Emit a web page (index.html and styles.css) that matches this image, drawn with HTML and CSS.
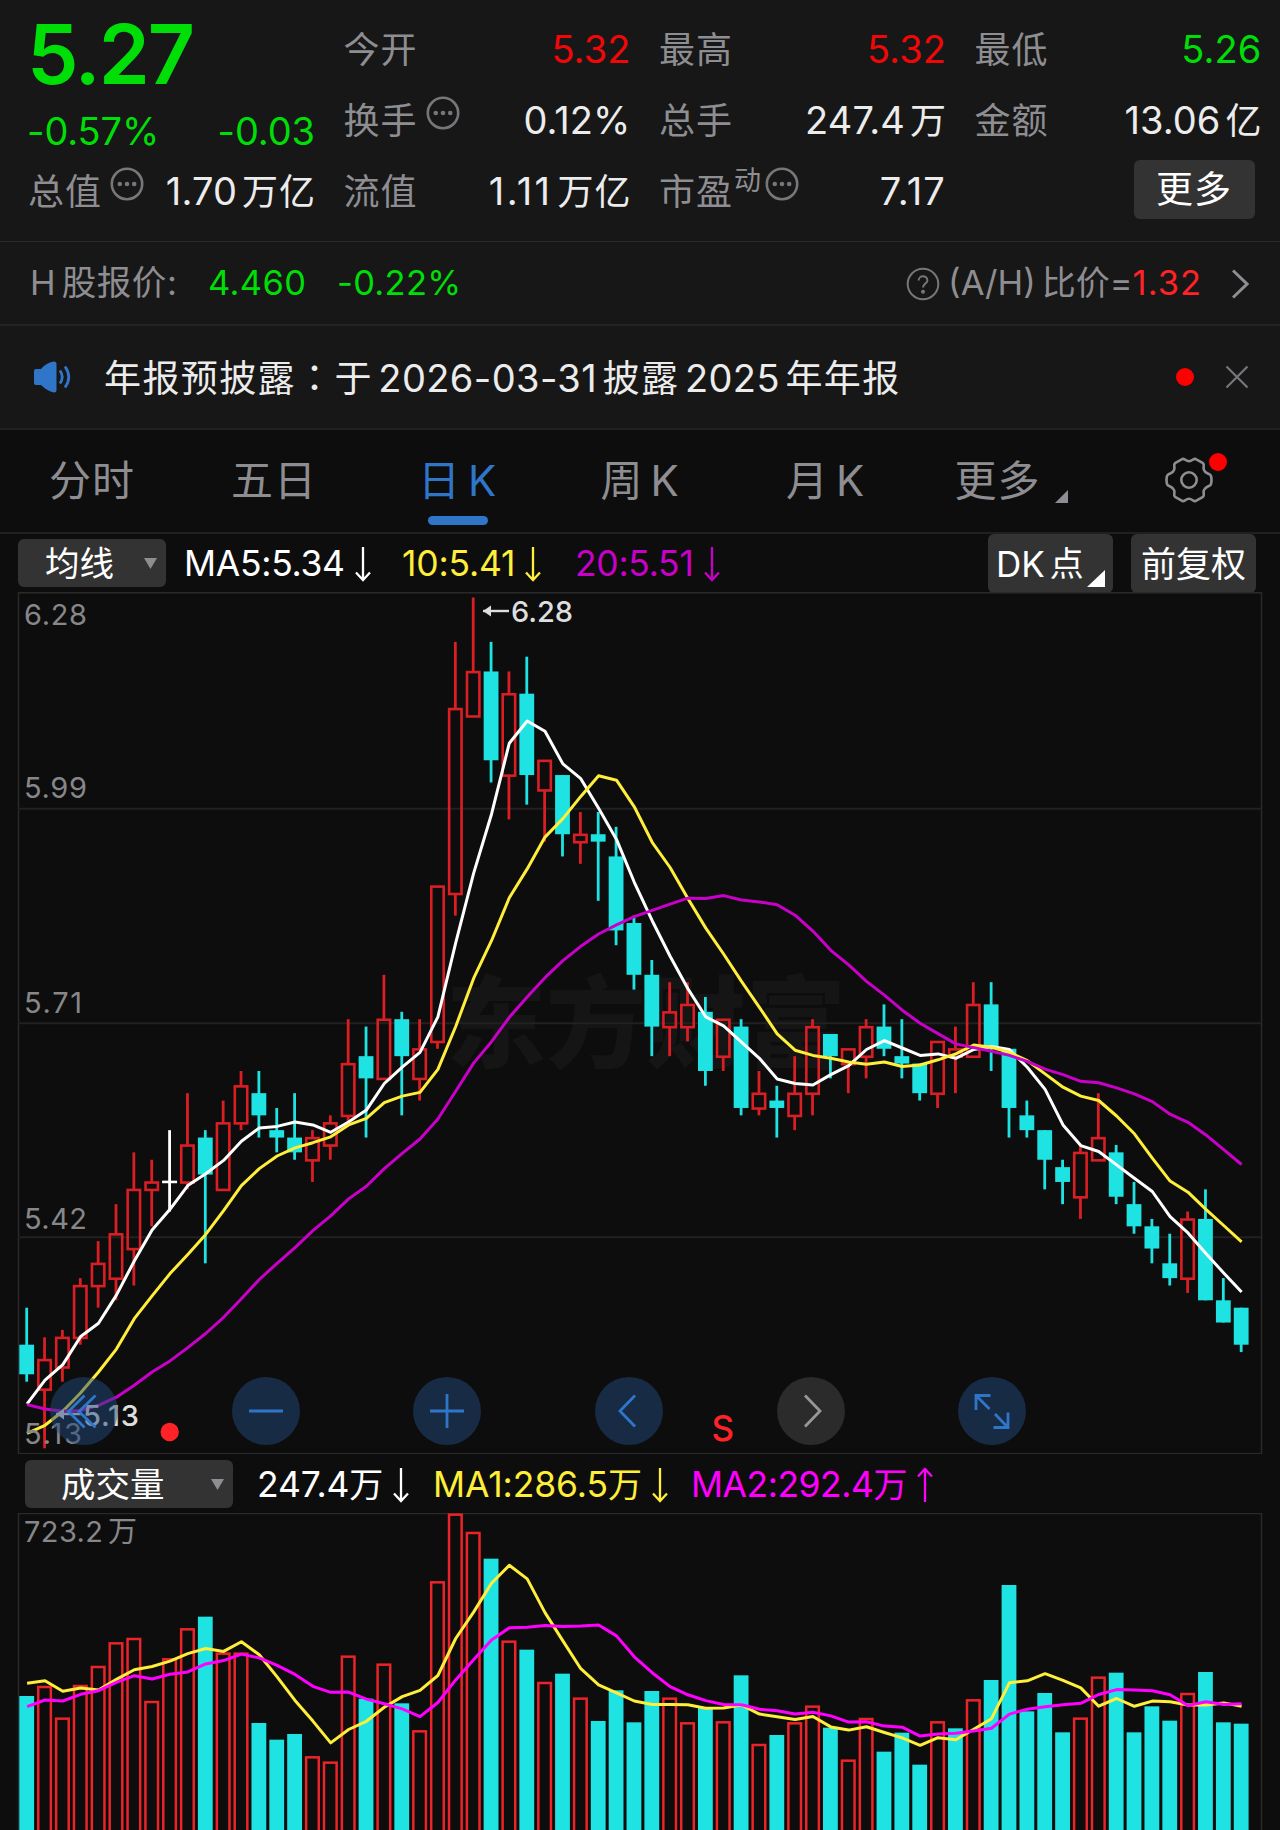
FILE: index.html
```html
<!DOCTYPE html>
<html lang="zh-CN">
<head>
<meta charset="utf-8">
<title>日K 行情</title>
<link rel="stylesheet" href="styles.css">
</head>
<body>
<svg class="defs" width="0" height="0">
  <symbol id="i-dots" viewBox="0 0 34 34"><circle cx="17" cy="17" r="15.2" fill="none" stroke="#77777b" stroke-width="2.6"/><g fill="#77777b"><circle cx="9.8" cy="17" r="2.3"/><circle cx="17" cy="17" r="2.3"/><circle cx="24.2" cy="17" r="2.3"/></g></symbol>
  <symbol id="i-down" viewBox="0 0 16 36"><path d="M8 1V34M1 26.5L8 34L15 26.5" fill="none" stroke="currentColor" stroke-width="2.3"/></symbol>
  <symbol id="i-up" viewBox="0 0 16 36"><path d="M8 35V2M1 9.5L8 2L15 9.5" fill="none" stroke="currentColor" stroke-width="2.3"/></symbol>
</svg>

<section class="quote">
  <div class="col">
    <div class="price">5.27</div>
    <div class="cell change"><span>-0.57%</span><span>-0.03</span></div>
    <div class="cell"><span class="label">总值</span><svg class="dots"><use href="#i-dots"/></svg><span class="val">1.70<i>万亿</i></span></div>
  </div>
  <div class="col">
    <div class="cell"><span class="label">今开</span><span class="val up">5.32</span></div>
    <div class="cell"><span class="label">换手</span><svg class="dots"><use href="#i-dots"/></svg><span class="val">0.12%</span></div>
    <div class="cell"><span class="label">流值</span><span class="val ones">1.11<i>万亿</i></span></div>
  </div>
  <div class="col">
    <div class="cell"><span class="label">最高</span><span class="val up">5.32</span></div>
    <div class="cell"><span class="label">总手</span><span class="val">247.4<i>万</i></span></div>
    <div class="cell"><span class="label">市盈</span><span class="sup">动</span><svg class="dots tight"><use href="#i-dots"/></svg><span class="val pe">7.17</span></div>
  </div>
  <div class="col">
    <div class="cell"><span class="label">最低</span><span class="val down">5.26</span></div>
    <div class="cell"><span class="label">金额</span><span class="val">13.06<i>亿</i></span></div>
    <div class="cell"><span class="more">更多</span></div>
  </div>
</section>

<section class="hshare">
  <span class="h-label">H<i>股报价:</i></span>
  <span class="h-price">4.460</span>
  <span class="h-pct">-0.22%</span>
  <svg class="help" viewBox="0 0 34 34" fill="none" stroke="#77777b" stroke-width="2"><circle cx="17" cy="17" r="15.3"/><path d="M12.6 13.6C12.6 7.9 21.4 7.9 21.4 13.4C21.4 16.6 17 16.6 17 20.6"/><circle cx="17" cy="24.8" r="1" fill="#77777b"/></svg>
  <span class="ratio">(A/H)<i>比价</i>=<b>1.32</b></span>
  <svg class="chev" viewBox="0 0 18 30"><path d="M2 1.5L16 15L2 28.500" fill="none" stroke="#8e8e92" stroke-width="3"/></svg>
</section>

<section class="notice">
  <svg class="speaker" viewBox="0 0 40 32"><path d="M1 10Q1 8 3 8H8Q14 1 21 0.500Q23.500 0.500 23.500 3V29Q23.500 31.500 21 31.500Q14 30 8 24H3Q1 24 1 22Z" fill="#2f76c9"/><path d="M27 9.500Q31.500 16 27 22.500M32 5.500Q39.500 16 32 26.500" fill="none" stroke="#2f76c9" stroke-width="2.800"/></svg>
  <span class="n-text">年报预披露<em lang="zh-TW">：</em>于<i>2026-03-31</i>披露<i>2025</i>年年报</span>
  <span class="red-dot"></span>
  <svg class="close" viewBox="0 0 24 24"><path d="M1.500 1.500L22.500 22.500M22.500 1.500L1.500 22.500" stroke="#77777b" stroke-width="2.200"/></svg>
</section>

<nav class="tabs">
  <span class="tab">分时</span>
  <span class="tab">五日</span>
  <span class="tab active">日<i>K</i></span>
  <span class="tab">周<i>K</i></span>
  <span class="tab">月<i>K</i></span>
  <span class="tab tab-more">更多<svg viewBox="0 0 13 13"><path d="M13 0V13H0Z" fill="#8e8e92"/></svg></span>
  <span class="tab tab-gear">
    <svg viewBox="0 0 48 46" fill="none" stroke="#8e8e92" stroke-width="2.600" stroke-linejoin="round"><path d="M17.600 1.900C20 1.500 20.500 4.200 24 4.200S28 1.500 30.400 1.900L38 6.200C40 8 37.800 9.200 38.800 12.600S42.500 16 45 17.600Q46.500 18.500 46.500 23T45 28.400C42.500 30 39.800 30 38.800 33.400S40 38 38 39.800L30.400 44.100C28 44.500 27.500 41.800 24 41.800S20 44.500 17.600 44.100L10 39.800C8 38 10.200 36.800 9.200 33.400S5.500 30 3 28.400Q1.500 27.500 1.500 23T3 17.600C5.500 16 8.200 16 9.200 12.600S8 8 10 6.200Z"/><circle cx="24" cy="23" r="7.700"/></svg>
    <span class="red-dot badge"></span>
  </span>
</nav>

<section class="indicator">
  <span class="select s-ma">均线<svg viewBox="0 0 13 11"><path d="M0 0H13L6.500 11Z" fill="#8e8e92"/></svg></span>
  <span class="ma white m1">MA5:5.34<svg class="arrow"><use href="#i-down"/></svg></span>
  <span class="ma yellow m2">10:5.41<svg class="arrow"><use href="#i-down"/></svg></span>
  <span class="ma purple m3">20:5.51<svg class="arrow"><use href="#i-down"/></svg></span>
  <span class="tool dk">DK<i>点</i><svg viewBox="0 0 18 17"><path d="M18 0V17H0Z" fill="#fff"/></svg></span>
  <span class="tool">前复权</span>
</section>

<section class="kline">
  <svg id="kline" class="plot" width="1280" height="862" viewBox="0 592 1280 862"></svg>
  <div class="controls">
    <span class="ctl"><svg viewBox="-34 -34 68 68"><path d="M0.500 -15.500L-15.500 0.500L0.500 16.500M11.500 -15.500L-5 0.500L11.500 16.500"/></svg></span>
    <span class="ctl"><svg viewBox="-34 -34 68 68"><path d="M-17 0H17"/></svg></span>
    <span class="ctl"><svg viewBox="-34 -34 68 68"><path d="M-17 0H17M0 -17V17"/></svg></span>
    <span class="ctl"><svg viewBox="-34 -34 68 68"><path d="M6 -15.500L-9 0L6 15.500"/></svg></span>
    <span class="ctl off"><svg viewBox="-34 -34 68 68"><path d="M-6 -15.500L9 0L-6 15.500"/></svg></span>
    <span class="ctl"><svg viewBox="-34 -34 68 68"><path d="M-16 -1V-15.500H-1.500M-16 -15.500L-2.500 -2M16 1.500V16.500H1.500M16 16.500L3 3"/></svg></span>
  </div>
</section>

<section class="vol-head">
  <span class="select s-vol">成交量<svg viewBox="0 0 13 11"><path d="M0 0H13L6.500 11Z" fill="#8e8e92"/></svg></span>
  <span class="ma white v1">247.4<i>万</i><svg class="arrow"><use href="#i-down"/></svg></span>
  <span class="ma yellow v2">MA1:286.5<i>万</i><svg class="arrow"><use href="#i-down"/></svg></span>
  <span class="ma magenta v3">MA2:292.4<i>万</i><svg class="arrow"><use href="#i-up"/></svg></span>
</section>

<section class="volume">
  <svg id="volume" class="plot" width="1280" height="317" viewBox="0 1513 1280 317"></svg>
</section>
<script src="script.js"></script>
</body>
</html>
```
FILE: styles.css
```css
* { box-sizing: border-box; }
body {
  margin: 0; width: 1280px; height: 1830px; overflow: hidden;
  background: #0d0d0d; color: #ececec;
  font-family: Inter, "Noto Sans CJK SC", sans-serif;
  font-weight: 380; line-height: 1; white-space: nowrap;
}
i, em, b { font-style: normal; font-weight: inherit; }
svg { display: block; flex: none; }
.defs { position: absolute; }

.quote {
  display: grid; grid-template-columns: repeat(4, 286px); column-gap: 29.5px;
  height: 242px; padding: 14px 0 0 28px;
  background: #171717; border-bottom: 1px solid #2a2a2a;
}
.col { display: flex; flex-direction: column; }
.cell { display: flex; align-items: center; height: 71px; font-size: 38px; }
.label { color: #8e8e92; font-size: 36px; letter-spacing: 1px; }
.val { margin-left: auto; margin-right: -1px; margin-top: -1px; letter-spacing: 0.1px; }
.val i { margin-left: 5px; font-size: 36px; letter-spacing: 1px; margin-right: -1px; }
.ones { letter-spacing: 2.4px; }
.pe { letter-spacing: 1.2px; }
.up { color: #f00808; }
.down, .price, .change, .h-price, .h-pct { color: #00de08; }
.price { height: 81px; line-height: 81px; font-size: 82px; font-weight: 600; letter-spacing: -2px; margin-left: -1px; }
.change { justify-content: space-between; height: 71px; letter-spacing: -0.1px; margin: 0 -1px; }
.col:first-child .cell:last-child { height: 51px; }
.dots { width: 34px; height: 34px; margin: -16px 0 0 8px; }
.dots.tight { margin-left: 4px; }
.sup { color: #8e8e92; font-size: 27px; margin: -22px 0 0 1px; }
.more {
  margin: -5px 6px 0 auto; width: 121px; height: 59px; line-height: 60px; text-align: center;
  background: #333; border-radius: 6px; font-size: 37px; color: #fff; letter-spacing: 1px;
}

.hshare {
  display: flex; align-items: center; height: 84px; padding: 1px 0 0 30px;
  background: #171717; border-bottom: 2px solid #232323; font-size: 34.5px;
}
.h-label { width: 178px; color: #8e8e92; }
.h-label i { margin-left: 6px; letter-spacing: 0.6px; }
.h-price { width: 129px; letter-spacing: 0.4px; }
.h-pct { letter-spacing: 0.3px; }
.help { width: 34px; height: 34px; margin-left: auto; }
.ratio { color: #8e8e92; margin-left: 8px; }
.ratio i { margin: 0 0 0 6px; font-size: 34px; }
.ratio b { color: #ff2226; letter-spacing: 1px; }
.chev { width: 18px; height: 30px; margin: 0 31px 0 29px; }

.notice {
  display: flex; align-items: center; height: 104px; padding-left: 33px;
  background: #171717; border-bottom: 2px solid #222;
}
.speaker { width: 40px; height: 32px; margin-right: 31px; }
.n-text { font-size: 37px; letter-spacing: 1.4px; }
.n-text em { font-family: "Noto Sans CJK TC", sans-serif; }
.n-text i { font-size: 38px; letter-spacing: 0.4px; margin: 0 5.500px; }
.red-dot { width: 18px; height: 18px; border-radius: 50%; background: #f00; margin-left: auto; }
.close { width: 24px; height: 24px; margin: 0 31px; }

.tabs { display: flex; align-items: center; height: 104px; border-bottom: 2px solid #202020; padding-left: 1px; }
.tab {
  position: relative; display: flex; align-items: center; justify-content: center;
  width: 182px; height: 102px; color: #8e8e92; font-size: 42px; letter-spacing: 1px;
}
.tab i { margin-left: 7px; }
.tab:nth-child(3) { padding-left: 3px; }
.tab:nth-child(4) { padding-left: 4px; }
.tab:nth-child(5) { padding-left: 11px; }
.active { color: #2f76c9; }
.active::after {
  content: ""; position: absolute; left: 63px; bottom: 7px; width: 60px; height: 9px;
  border-radius: 5px; background: #2f76c9;
}
.tab-more { padding-left: 17px; width: 183px; }
.tab-more svg { width: 13px; height: 13px; margin: 30px 0 0 14px; }
.tab-gear svg { width: 48px; height: 46px; margin: -2px 0 0 8px; }
.badge { position: absolute; left: 115px; top: 23px; margin: 0; }

.indicator { display: flex; align-items: center; height: 58px; padding-left: 18px; }
.select {
  display: flex; align-items: center; justify-content: space-between; height: 48px;
  background: #333; border-radius: 6px; color: #fff; font-size: 34.5px;
}
.select svg { width: 13px; height: 11px; margin-top: -2px; }
.s-ma { width: 148px; padding: 2px 9px 0 27px; }
.ma { display: flex; align-items: center; font-size: 35.500px; padding-top: 2px; }
.arrow { width: 16px; height: 36px; margin-left: 10px; }
.white { color: #fff; }
.yellow { color: #ffee3a; }
.purple { color: #c800c8; }
.magenta { color: #f0f; }
.m1 { width: 218px; margin-left: 18px; letter-spacing: -0.3px; }
.m2 { width: 173px; letter-spacing: -0.2px; }
.m3 { letter-spacing: -0.3px; }
.tool {
  display: flex; align-items: center; justify-content: center; width: 125px; height: 59px; margin-right: 24px;
  background: #333; border-radius: 6px; color: #fff; font-size: 35px; padding-top: 2px;
}
.dk { position: relative; margin: 0 18px 0 auto; justify-content: flex-start; padding-left: 8px; }
.dk i { margin-left: 5px; font-size: 34px; }
.dk svg { position: absolute; right: 8px; bottom: 6px; width: 18px; height: 17px; }

.kline { position: relative; height: 863px; }
.controls { position: absolute; left: 50px; top: 784.500px; display: flex; gap: 113.700px; }
.ctl { width: 68px; height: 68px; border-radius: 50%; background: rgba(35, 73, 123, 0.5); }
.ctl path { fill: none; stroke: #2f76c9; stroke-width: 2.800; }
.off { background: #2b2b2c; }
.off path { stroke: #98989c; }

.vol-head { display: flex; align-items: center; height: 58px; padding: 0 0 0 25px; }
.s-vol { width: 208px; padding: 2px 9px 0 36px; }
.v1 { width: 176px; margin-left: 24px; letter-spacing: -0.1px; }
.v2 { width: 258px; letter-spacing: -0.1px; }
.v3 { letter-spacing: -0.500px; }
.ma i { font-size: 34px; }

.wm { font-size: 100px; font-weight: 900; fill: #151515; }
.axis { font-size: 29px; fill: #87878a; }
.mark { font-size: 29px; font-weight: 460; fill: #dedede; }
.sell { font-size: 35px; font-weight: 500; fill: #ff2226; }
.frame { fill: none; stroke: #2a2a2a; stroke-width: 1.500; }
.grid { stroke: #212121; stroke-width: 2; }
.line { fill: none; stroke-width: 3; stroke-linejoin: round; }
```
FILE: script.js
```js
// One row per day: kind (r rising, c falling, w flat), high, body top, body bottom, low (in cents)
const days = `c 532 527 523 522|r 528 525 521 513|r 529 528 524 522|r 536 535 528 527|r 541 538 535 532
r 546 542 536 533|r 553 548 540 535|r 552 549 548 543|w 556 549 549 545|r 561 554 549 548
c 556 555 550 538|r 560 557 548 548|r 564 562 557 556|c 564 561 558 555|c 559 556 555 553
c 561 555 553 552|r 556 555 552 549|r 558 557 554 552|r 571 565 558 557|c 570 566 563 555
r 577 571 563 563|c 572 571 566 558|r 571 567 563 560|r 589 589 568 567|r 622 613 588 585
r 628 618 612 612|c 622 618 606 603|r 618 615 604 598|c 620 615 604 600|r 606 606 602 595
c 604 604 596 593|r 599 596 595 592|c 599 596 595 587|c 597 593 583 581|c 585 584 577 575
c 579 577 570 566|r 576 572 570 566|r 576 573 570 568|c 574 572 564 562|r 571 571 566 564
c 571 570 559 558|r 564 561 559 558|c 562 560 559 555|r 566 561 558 556|r 571 570 561 558
c 569 569 566 563|r 567 567 565 561|r 571 570 566 563|c 573 570 567 566|c 571 566 565 563
c 565 565 561 560|r 568 568 561 559|r 570 567 566 561|r 576 573 566 566|c 576 573 567 564
c 567 567 559 555|c 560 558 556 555|c 556 556 552 548|c 552 551 549 546|r 554 553 547 544
r 561 555 552 552|c 554 553 547 546|c 549 546 543 542|c 544 543 540 538|c 542 538 536 535
r 545 544 536 534|c 548 544 533 533|c 536 533 530 530|c 532 532 527 526`
  .split(/[|\n]/).map(s => { const [k, ...n] = s.trim().split(' '); return [k, ...n.map(Number)]; });

// Volume bars: kind and distance of the bar's top below y = 1360, in thirds of a pixel
const vols = `c1008 r978 r1073 r975 r918 r847 r834 r1023 r895 r805 c770 r878 r878 c1089 c1139 c1122 r1189 r1205
r887 c1016 r911 c1030 r1111 r664 r461 r516 c596 r842 c869 r966 c941 r1013 c1083 c991 c1087 c993 r1013 r1087
c1043 r1084 c946 r1152 c1125 r1087 r1037 c1103 r1199 r1074 c1175 c1118 c1214 r1084 c1105 r1018 c960 c675
c1054 c999 c1117 r1073 r950 c938 c1117 c1039 c1082 r999 c936 c1087 c1091`
  .split(/\s+/).map(s => [s[0], +s.slice(1)]);

const RED = '#d91f24', CYAN = '#1fe3e3';
const X = i => 26.7 + i * 17.86;
const Y = p => 597.5 + (628 - p) * 7.398;
const V = v => 1360 + v / 3;

// Moving average of n values; the first points come from days before the window
function average(values, n, lead) {
  return values.map((_, i) => i < lead.length ? lead[i]
    : values.slice(i - n + 1, i + 1).reduce((a, b) => a + b, 0) / n);
}
const line = (pts, y, color, lift = 0) =>
  `<polyline class="line" stroke="${color}" points="${pts.map((p, i) => (X(i) + 0.4).toFixed(1) + ',' + (y(p) - lift).toFixed(1)).join(' ')}"/>`;
const vline = (x, a, b, c) => `<path d="M${x} ${a}V${b}" stroke="${c}" stroke-width="2.8"/>`;
const arrow = (x, y) => `<path d="M${x} ${y}H${x + 26}" stroke="#dedede" stroke-width="2.4"/><path d="M${x} ${y}l8 -5.500v11z" fill="#dedede"/>`;

let k = `<text class="wm" x="446" y="1060" textLength="400">东方财富</text>
<path class="frame" d="M18.500 1453.700V592.700H1261.500V1453.700Z"/>
<path class="grid" d="M18 808.700H1261M18 1023.300H1261M18 1237.300H1261"/>`;
days.forEach(([kind, hi, top, bot, lo], i) => {
  const x = X(i);
  if (kind === 'c') {
    k += vline(x, Y(hi), Y(lo), CYAN) + `<rect x="${x - 7.4}" y="${Y(top)}" width="14.8" height="${Y(bot) - Y(top)}" fill="${CYAN}"/>`;
  } else if (kind === 'r') {
    k += vline(x, Y(hi), Y(top), RED) + vline(x, Y(bot), Y(lo), RED)
      + `<rect x="${x - 6.2}" y="${Y(top) + 0.6}" width="12.400" height="${Y(bot) - Y(top)}" fill="none" stroke="${RED}" stroke-width="2.6"/>`;
  } else {
    k += vline(x, Y(hi), Y(lo), '#fff') + `<path d="M${x - 7.5} ${Y(top)}h15" stroke="#fff" stroke-width="2.6"/>`;
  }
});
const closes = days.map(d => d[0] === 'r' ? d[2] : d[3]);
k += line(average(closes, 5, [518.9, 522.1, 524.2, 528]), Y, '#fff', 0.8)
  + line(average(closes, 10, [514.9, 516, 517.9, 520.4, 523.2, 526.3, 530.4, 533.5, 536.5]), Y, '#ffee3a', 0.8)
  + line(average(closes, 20, [518.8, 518.2, 517.9, 518, 518.7, 519.8, 521.4, 523.2, 524.7, 526.5, 528.4, 530.6, 533.1, 535.7, 537.9, 540, 542.3, 544.3, 546.6]), Y, '#c800c8', 0.8);
[['6.28', 625], ['5.99', 798], ['5.71', 1013], ['5.42', 1228.5], ['5.13', 1443.5]].forEach(([t, y]) => {
  k += `<text class="axis" x="24" y="${y}" textLength="${t === '5.13' || t === '5.71' ? 58 : 63}">${t}</text>`;
});
k += arrow(483, 611) + `<text class="mark" x="511" y="621.5" textLength="62">6.28</text>`
  + arrow(56, 1414) + `<text class="mark" x="83" y="1425.5" textLength="56">5.13</text>`
  + `<circle cx="169.700" cy="1432" r="9.200" fill="#ff2226"/><text class="sell" x="711.500" y="1440.500">S</text>`;
document.getElementById('kline').innerHTML = k;

let v = `<path class="frame" d="M18.500 1830V1513.500H1261.500V1830"/>`;
vols.forEach(([kind, h], i) => {
  const x = X(i), y = V(h);
  v += kind === 'c' ? `<rect x="${x - 7.4}" y="${y}" width="14.8" height="400" fill="${CYAN}"/>`
    : `<rect x="${x - 6.3}" y="${y + 1}" width="12.600" height="400" fill="none" stroke="#ea2428" stroke-width="2.5"/>`;
});
const heights = vols.map(d => d[1]);
v += line(average(heights, 5, [970, 962, 994, 984]), V, '#ffee3a')
  + line(average(heights, 10, [1040, 1020, 1023, 1003, 992, 967, 947, 957, 943]), V, '#f0f')
  + `<text class="axis" x="24" y="1542" textLength="79">723.2</text><text class="axis" x="108" y="1542">万</text>`;
document.getElementById('volume').innerHTML = v;
```
